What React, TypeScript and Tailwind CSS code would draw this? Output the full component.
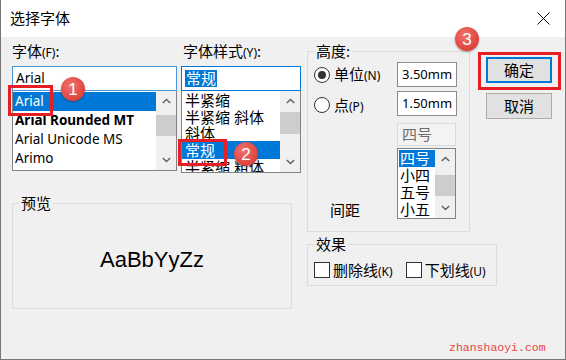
import { type ReactNode } from 'react';

function Chevron({ down }: { down?: boolean }) {
  return (
    <svg width="9" height="6" viewBox="0 0 9 6">
      <polyline
        points={down ? '0.8,1 4.5,4.6 8.2,1' : '0.8,5 4.5,1.4 8.2,5'}
        fill="none"
        stroke="#606060"
        strokeWidth="1.4"
      />
    </svg>
  );
}

function ScrollBar({ thumbTop, thumbHeight }: { thumbTop: string; thumbHeight: string }) {
  return (
    <div className="w-[20px] bg-[#f0f0f0] flex flex-col">
      <div className="h-[20px] flex items-center justify-center">
        <Chevron />
      </div>
      <div className="flex-1">
        <div className={`bg-[#cdcdcd] ${thumbTop} ${thumbHeight}`} />
      </div>
      <div className="h-[20px] flex items-center justify-center">
        <Chevron down />
      </div>
    </div>
  );
}

function Badge({ n, className }: { n: string; className: string }) {
  return (
    <div
      className={`absolute w-[24px] h-[24px] rounded-full bg-[radial-gradient(circle_at_40%_35%,#f2716b,#d42f2c)] shadow-[0_1px_2px_rgba(0,0,0,0.35)] flex items-center justify-center text-white text-[17px] leading-none font-['Liberation_Sans',sans-serif] ${className}`}
    >
      {n}
    </div>
  );
}

function Group({ label, className, children }: { label: string; className: string; children: ReactNode }) {
  return (
    <fieldset className={`border border-[#dcdcdc] ${className}`}>
      <legend className="ml-[6px] px-[2px] leading-[15px]">{label}</legend>
      {children}
    </fieldset>
  );
}

const fonts = [
  { name: 'Arial', cls: '' },
  { name: 'Arial Rounded MT', cls: 'font-bold' },
  { name: 'Arial Unicode MS', cls: '' },
  { name: 'Arimo', cls: '' },
];

const styles = [
  { name: '半紧缩', h: 'h-[17px] leading-[17px]' },
  { name: '半紧缩 斜体', h: 'h-[17px] leading-[17px]' },
  { name: '斜体', h: 'h-[15px] leading-[15px]' },
  { name: '常规', h: 'h-[18px] leading-[18px]', active: true },
  { name: '半紧缩 粗体', h: 'h-[17px] leading-[17px]' },
];

const sizes = ['四号', '小四', '五号', '小五'];

const small = "text-[12px] font-['Noto_Sans',sans-serif]";

export default function App() {
  return (
    <div className="relative w-[566px] h-[360px] bg-[#f0f0f0] border-x border-b border-[#767676] text-black text-[15px] font-['Noto_Sans','Noto_Sans_CJK_SC',sans-serif] overflow-hidden">
      {/* Title bar */}
      <div className="h-[37px] bg-white flex items-center pl-[9px]">
        <span className="flex-1 leading-none">选择字体</span>
        <svg width="13" height="13" viewBox="0 0 13 13" className="mr-[15px]">
          <path d="M0.5 0.5L12.5 12.5M12.5 0.5L0.5 12.5" stroke="#000" strokeWidth="1" />
        </svg>
      </div>

      <div className="flex pt-[4px] pl-[11px]">
        {/* Font + style + preview */}
        <div className="w-[289px] flex flex-col">
          <div className="flex gap-[4px]">
            <div className="w-[165px]">
              <div className="h-[21px] leading-[21px]">
                字体<span className={small}>(F)</span>:
              </div>
              <div className="mt-[4px] h-[25px] border border-[#4a94dc] bg-white pl-[3px] flex items-center text-[13.5px]">
                Arial
              </div>
              <div className="h-[80px] border-x border-b border-[#828282] bg-white flex">
                <div className="flex-1 pt-[1px] text-[13.5px]">
                  {fonts.map((f, i) => (
                    <div
                      key={f.name}
                      className={`h-[19px] leading-[19px] pl-[2px] whitespace-nowrap ${f.cls} ${
                        i === 0 ? 'bg-[#0078d7] text-white' : ''
                      }`}
                    >
                      {f.name}
                    </div>
                  ))}
                </div>
                <ScrollBar thumbTop="mt-[4px]" thumbHeight="h-[21px]" />
              </div>
            </div>

            <div className="w-[120px]">
              <div className="h-[21px] leading-[21px] pl-[2px] whitespace-nowrap">
                字体样式<span className={small}>(Y)</span>:
              </div>
              <div className="mt-[4px] h-[25px] border border-[#0078d7] bg-white pl-[3px] flex items-center">
                <span className="bg-[#0078d7] text-white leading-[17px] px-[1px]">常规</span>
              </div>
              <div className="h-[82px] border-x border-b border-[#828282] bg-white flex">
                <div className="flex-1 pt-[1px] overflow-hidden">
                  {styles.map((s) => (
                    <div
                      key={s.name}
                      className={`${s.h} pl-[3px] whitespace-nowrap overflow-hidden ${
                        s.active ? 'bg-[#0078d7] text-white' : ''
                      }`}
                    >
                      {s.name}
                    </div>
                  ))}
                </div>
                <ScrollBar thumbTop="mt-[1px]" thumbHeight="h-[22px]" />
              </div>
            </div>
          </div>

          <Group label="预览" className="mt-[23px] w-[280px] h-[113px]">
            <div className="h-[97px] flex items-center justify-center">
              <span className="font-['Liberation_Sans',sans-serif] text-[22px] leading-[22px]">AaBbYyZz</span>
            </div>
          </Group>
        </div>

        {/* Height, effects, buttons */}
        <div className="ml-[6px] flex flex-col">
          <div className="flex">
            <Group label="高度:" className="mt-[3px] w-[163px] h-[188px]">
              <div className="pt-[3px] pl-[6px]">
                <div className="flex items-center h-[25px]">
                  <div className="w-[83px] flex items-center gap-[4px]">
                    <div className="w-[16px] h-[16px] rounded-full border border-[#333] bg-white flex items-center justify-center">
                      <div className="w-[8px] h-[8px] rounded-full bg-[#333]" />
                    </div>
                    <span className="whitespace-nowrap">
                      单位<span className={small}>(N)</span>
                    </span>
                  </div>
                  <div className="w-[60px] h-[25px] border border-[#8c8c8c] bg-white pl-[4px] flex items-center text-[13px]">
                    3.50mm
                  </div>
                </div>
                <div className="mt-[4px] flex items-center h-[25px]">
                  <div className="w-[83px] flex items-center gap-[4px] pt-[3px]">
                    <div className="w-[16px] h-[16px] rounded-full border border-[#333] bg-white" />
                    <span className="whitespace-nowrap">
                      点<span className={small}>(P)</span>
                    </span>
                  </div>
                  <div className="w-[60px] h-[25px] border border-[#8c8c8c] bg-white pl-[4px] flex items-center text-[13px]">
                    1.50mm
                  </div>
                </div>
                <div className="mt-[7px] ml-[83px] w-[59px] h-[23px] border border-[#d9d9d9] bg-[#f3f3f3] pl-[4px] flex items-center text-[#6d6d6d]">
                  四号
                </div>
                <div className="mt-[2px] flex">
                  <div className="w-[83px] flex items-end pl-[16px]">
                    <span className="leading-[17px]">间距</span>
                  </div>
                  <div className="w-[59px] h-[71px] border border-[#828282] bg-white flex">
                    <div className="flex-1 pt-[1px] pl-[1px]">
                      {sizes.map((s, i) => (
                        <div
                          key={s}
                          className={`h-[17px] leading-[17px] pl-[1px] ${i === 0 ? 'bg-[#0078d7] text-white' : ''}`}
                        >
                          {s}
                        </div>
                      ))}
                    </div>
                    <ScrollBar thumbTop="mt-[6px]" thumbHeight="h-[21px]" />
                  </div>
                </div>
              </div>
            </Group>

            <div className="ml-[16px] mt-[16px] flex flex-col gap-[10px]">
              <div className="w-[66px] h-[26px] bg-[#e1e1e1] border-2 border-[#0078d7] flex items-center justify-center">
                确定
              </div>
              <div className="w-[66px] h-[26px] bg-[#e1e1e1] border border-[#adadad] flex items-center justify-center">
                取消
              </div>
            </div>
          </div>

          <Group label="效果" className="mt-[5px] w-[190px] h-[49px]">
            <div className="pt-[7px] pl-[6px] flex items-center">
              <div className="w-[16px] h-[16px] border border-[#333] bg-white" />
              <span className="ml-[3px] whitespace-nowrap">
                删除线<span className={small}>(K)</span>
              </span>
              <div className="ml-[13px] w-[16px] h-[16px] border border-[#333] bg-white" />
              <span className="ml-[3px] whitespace-nowrap">
                下划线<span className={small}>(U)</span>
              </span>
            </div>
          </Group>
        </div>
      </div>

      {/* Annotations */}
      <div className="absolute left-[7px] top-[85px] w-[45px] h-[31px] border-[3px] border-[#e81e25]" />
      <div className="absolute left-[177px] top-[139px] w-[49px] h-[27px] border-[3px] border-[#e81e25]" />
      <div className="absolute left-[477px] top-[52px] w-[83px] h-[38px] border-[3px] border-[#e81e25]" />
      <Badge n="1" className="left-[60px] top-[77px]" />
      <Badge n="2" className="left-[233px] top-[142px]" />
      <Badge n="3" className="left-[454px] top-[27px]" />

      <div className="absolute left-[448px] top-[341px] text-[11.5px] leading-[13px] text-[#e8453f] font-['Liberation_Mono',monospace]">
        zhanshaoyi.com
      </div>
    </div>
  );
}
